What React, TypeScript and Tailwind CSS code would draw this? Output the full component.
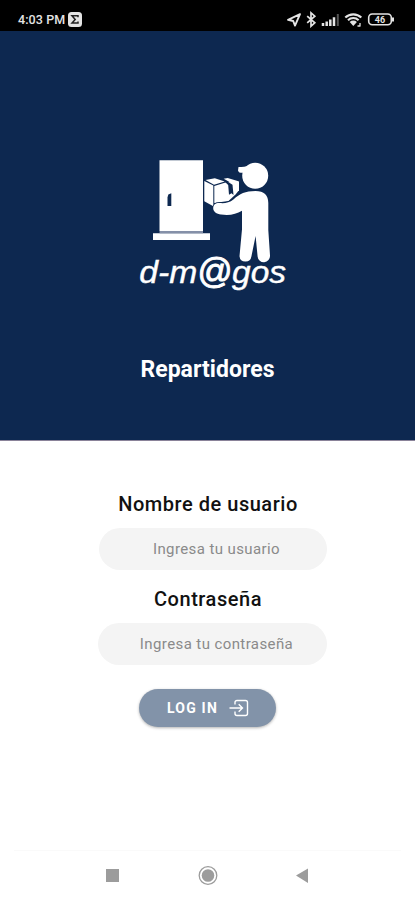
import React from 'react';

interface FieldProps {
  id: string;
  label: string;
  placeholder: string;
  type: string;
  inputClass: string;
}

const fields: FieldProps[] = [
  {
    id: 'usuario',
    label: 'Nombre de usuario',
    placeholder: 'Ingresa tu usuario',
    type: 'text',
    inputClass: 'w-[228px] ml-px pl-2 tracking-[0.4px]',
  },
  {
    id: 'contrasena',
    label: 'Contraseña',
    placeholder: 'Ingresa tu contraseña',
    type: 'password',
    inputClass: 'w-[229px] pl-[9px] tracking-[0.4px]',
  },
];

const StatusBar: React.FC = () => (
  <div className="h-[31px] bg-black text-[#e4e4e4] flex items-center justify-between pl-[18px] pr-[20px] pt-[8px]">
    <div className="flex items-center gap-[3px]">
      <span className="pt-px text-[12.5px] font-medium leading-none tracking-[0.1px] whitespace-nowrap">4:03 PM</span>
      <svg width="14" height="15" viewBox="0 0 14 15">
        <rect width="14" height="15" rx="3.5" fill="currentColor" />
        <path d="M10 5.2V3.8H4l3.2 3.6L4 11h6V9.6" fill="none" stroke="#222" strokeWidth="1.5" />
      </svg>
    </div>
    {/* location, bluetooth, signal, wifi, battery */}
    <svg width="109" height="17" viewBox="286 11 109 17" fill="none" stroke="currentColor">
      <path d="M300 14.2 288 19.8l5.2 1.2 1.8 4.6z" strokeWidth="1.9" strokeLinejoin="round" />
      <path d="m307.2 16.2 7.6 6.600-3.8 3.400V12.900l3.8 3.300-7.6 6.600" strokeWidth="1.7" />
      <path d="M323 23v3M326.7 21.500v4.500M330.3 19.500v6.500M334 17.200v8.800" strokeWidth="2.5" />
      <path d="M337.8 14v12" strokeWidth="2" stroke="#555" />
      <path d="M345.3 17.6a11.5 11.5 0 0 1 16 0M348 20.2a7.6 7.6 0 0 1 10.6 0" strokeWidth="2.1" />
      <path d="m349.7 22 3.6 4 3.6-4a5.2 5.2 0 0 0-7.2 0z" fill="currentColor" stroke="none" />
      <path d="M357.5 26h3M360 23v3" strokeWidth="1.3" />
      <rect x="368.7" y="14" width="22.6" height="10.8" rx="3.5" strokeWidth="1.6" />
      <path d="M393 17.5v4" strokeWidth="2" />
      <text x="380" y="22.6" textAnchor="middle" fontSize="9" fontWeight="700" fill="currentColor" stroke="none">46</text>
    </svg>
  </div>
);

const Logo: React.FC = () => (
  <svg width="165" height="145" viewBox="130 150 165 145" fill="#fff" className="ml-[10px]">
    {/* door */}
    <path d="M159.5 160.3H203V231h-43.5z" />
    <path d="M153 233.2h57v6.8h-57z" />
    <path d="M159.5 231H203v2.2h-43.5z" fill="#8590a8" />
    <path d="M168.3 194.5l3-1.3v12.8h-3.8v-8.5z" fill="#0d2850" />
    {/* parcel */}
    <path d="m204.3 181 9 4.4v20.8l-9-5z" />
    <path d="m205.500 180 9.300-1.700 10 3.200-10.800 3.300z" />
    <path d="m214.300 186 12-3.700 12.700-.6v8.500l-3.500 4.300-7 6.500-14.200 2z" />
    <path d="m223.700 178.700 4-.8 11.600 3.600-6.300 2.500z" />
    <path d="m224.300 181.300 1.500-.8 6.700 4.200 1 10.300-2-1.800-2.500 1.500-.8-9.700z" fill="#0d2850" />
    {/* courier */}
    <circle cx="255.200" cy="175.700" r="13" />
    <path d="M247 166.200c-3 .9-5.500.8-8.500.7l-.5 3.500c.5 2 2 2.600 6 2.400z" />
    <path
      d="M255.500 191c8.500 0 12.800 4 12.800 12v27l1.700 25.500a6.200 6.200 0 0 1-12.400.9L255.600 236l-4.200 20.500a6 6 0 0 1-11.900-.3l2.500-27v-18.500c-6 3.500-12 5-21 3.800-4.500-.6-7.800-2.700-7.800-6.200 0-3.500 2.500-5.400 6.500-5.200 5.500.3 9.500-.1 14-3.800 6-5.500 11.500-8.300 21.800-8.300z"
      stroke="#0d2850"
      strokeWidth="1.600"
      paintOrder="stroke"
    />
    {/* wordmark, with an oversized at sign */}
    <g className="font-['Liberation_Sans',Arial,sans-serif] italic" stroke="#fff" strokeWidth="0.400">
      <text x="139.300" y="283" textLength="58" lengthAdjust="spacingAndGlyphs" fontSize="31">d-m</text>
      <text x="197" y="283" textLength="35" lengthAdjust="spacingAndGlyphs" fontSize="34.500" strokeWidth="0.900">@</text>
      <text x="232" y="283" textLength="54" lengthAdjust="spacingAndGlyphs" fontSize="31">gos</text>
    </g>
  </svg>
);

const Field: React.FC<FieldProps> = ({ id, label, placeholder, type, inputClass }) => (
  <div className="h-[95px] w-[229px] flex flex-col items-center">
    <label htmlFor={id} className="h-[38px] pt-[2px] pr-[8px] text-[20px] leading-[24px] font-medium tracking-[0.53px] text-[#111]">
      {label}
    </label>
    <input
      id={id}
      type={type}
      placeholder={placeholder}
      className={`h-[42px] shrink-0 rounded-full bg-[#f4f4f4] text-center text-[15px] text-[#333] placeholder:text-[#8a8a8a] outline-none ${inputClass}`}
    />
  </div>
);

const NavBar: React.FC = () => (
  <div className="mt-auto h-[50px] mx-[14px] border-t border-[#fafafa] flex">
    <svg width="387" height="50" viewBox="14 851 387 50" fill="#9c9c9c">
      <path d="M106 869h13v13h-13z" />
      <circle cx="208" cy="875.5" r="6.3" />
      <circle cx="208" cy="875.5" r="8.8" fill="none" stroke="#9c9c9c" strokeWidth="1.3" />
      <path d="M296 875.5 308 868.5v14.5z" />
    </svg>
  </div>
);

const App: React.FC = () => {
  return (
    <main className="w-full h-[900px] bg-white flex flex-col overflow-hidden font-[Roboto,sans-serif]">
      <StatusBar />

      <header className="h-[410px] shrink-0 bg-[#0d2850] border-b border-[#8a8399] flex flex-col items-center pt-[119px]">
        <Logo />
        <h1 className="mt-[61px] text-[23px] leading-[28px] font-bold tracking-[0.05px] text-white">Repartidores</h1>
      </header>

      <form className="pt-[49px] flex flex-col items-center pl-[9px]" onSubmit={(e) => e.preventDefault()}>
        {fields.map((field) => (
          <Field key={field.id} {...field} />
        ))}
        <button
          type="submit"
          className="mt-[9px] mr-[9px] w-[137px] h-[38px] rounded-full bg-[#8293a9] shadow-[0_1px_3px_rgba(0,0,0,0.3)] text-white flex items-center pl-[28px] gap-[11px]"
        >
          <span className="text-[14px] font-bold tracking-[1.2px] whitespace-nowrap">LOG IN</span>
          <svg width="20" height="18" viewBox="0 0 20 18" fill="none" stroke="currentColor" strokeWidth="1.4">
            <path d="M6 5.5V3.5A2 2 0 0 1 8 1.5h8.5a2 2 0 0 1 2 2v11a2 2 0 0 1-2 2H8a2 2 0 0 1-2-2v-2" />
            <path d="M.5 9h13M9.7 5.2 13.5 9l-3.8 3.8" />
          </svg>
        </button>
      </form>

      <NavBar />
    </main>
  );
};

export default App;
